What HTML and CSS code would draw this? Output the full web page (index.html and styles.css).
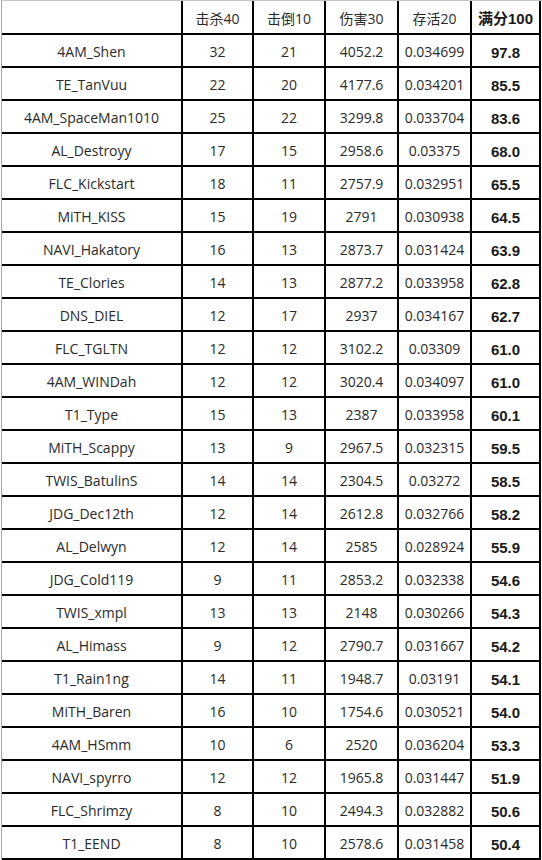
FILE: index.html
```html
<!DOCTYPE html>
<html lang="zh">
<head>
<meta charset="utf-8">
<title>Ranking</title>
<link rel="stylesheet" href="styles.css">
</head>
<body>
<div class="sheet">
  <div class="grid">
    <div class="c hd first"></div>
    <div class="c hd">击杀40</div>
    <div class="c hd">击倒10</div>
    <div class="c hd">伤害30</div>
    <div class="c hd">存活20</div>
    <div class="c hd total">满分100</div>

    <div class="c name">4AM_Shen</div><div class="c">32</div><div class="c">21</div><div class="c">4052.2</div><div class="c">0.034699</div><div class="c total">97.8</div>
    <div class="c name">TE_TanVuu</div><div class="c">22</div><div class="c">20</div><div class="c">4177.6</div><div class="c">0.034201</div><div class="c total">85.5</div>
    <div class="c name">4AM_SpaceMan1010</div><div class="c">25</div><div class="c">22</div><div class="c">3299.8</div><div class="c">0.033704</div><div class="c total">83.6</div>
    <div class="c name">AL_Destroyy</div><div class="c">17</div><div class="c">15</div><div class="c">2958.6</div><div class="c">0.03375</div><div class="c total">68.0</div>
    <div class="c name">FLC_Kickstart</div><div class="c">18</div><div class="c">11</div><div class="c">2757.9</div><div class="c">0.032951</div><div class="c total">65.5</div>
    <div class="c name">MiTH_KISS</div><div class="c">15</div><div class="c">19</div><div class="c">2791</div><div class="c">0.030938</div><div class="c total">64.5</div>
    <div class="c name">NAVI_Hakatory</div><div class="c">16</div><div class="c">13</div><div class="c">2873.7</div><div class="c">0.031424</div><div class="c total">63.9</div>
    <div class="c name">TE_Clories</div><div class="c">14</div><div class="c">13</div><div class="c">2877.2</div><div class="c">0.033958</div><div class="c total">62.8</div>
    <div class="c name">DNS_DIEL</div><div class="c">12</div><div class="c">17</div><div class="c">2937</div><div class="c">0.034167</div><div class="c total">62.7</div>
    <div class="c name">FLC_TGLTN</div><div class="c">12</div><div class="c">12</div><div class="c">3102.2</div><div class="c">0.03309</div><div class="c total">61.0</div>
    <div class="c name">4AM_WINDah</div><div class="c">12</div><div class="c">12</div><div class="c">3020.4</div><div class="c">0.034097</div><div class="c total">61.0</div>
    <div class="c name">T1_Type</div><div class="c">15</div><div class="c">13</div><div class="c">2387</div><div class="c">0.033958</div><div class="c total">60.1</div>
    <div class="c name">MiTH_Scappy</div><div class="c">13</div><div class="c">9</div><div class="c">2967.5</div><div class="c">0.032315</div><div class="c total">59.5</div>
    <div class="c name">TWIS_BatulinS</div><div class="c">14</div><div class="c">14</div><div class="c">2304.5</div><div class="c">0.03272</div><div class="c total">58.5</div>
    <div class="c name">JDG_Dec12th</div><div class="c">12</div><div class="c">14</div><div class="c">2612.8</div><div class="c">0.032766</div><div class="c total">58.2</div>
    <div class="c name">AL_Delwyn</div><div class="c">12</div><div class="c">14</div><div class="c">2585</div><div class="c">0.028924</div><div class="c total">55.9</div>
    <div class="c name">JDG_Cold119</div><div class="c">9</div><div class="c">11</div><div class="c">2853.2</div><div class="c">0.032338</div><div class="c total">54.6</div>
    <div class="c name">TWIS_xmpl</div><div class="c">13</div><div class="c">13</div><div class="c">2148</div><div class="c">0.030266</div><div class="c total">54.3</div>
    <div class="c name">AL_Himass</div><div class="c">9</div><div class="c">12</div><div class="c">2790.7</div><div class="c">0.031667</div><div class="c total">54.2</div>
    <div class="c name">T1_Rain1ng</div><div class="c">14</div><div class="c">11</div><div class="c">1948.7</div><div class="c">0.03191</div><div class="c total">54.1</div>
    <div class="c name">MiTH_Baren</div><div class="c">16</div><div class="c">10</div><div class="c">1754.6</div><div class="c">0.030521</div><div class="c total">54.0</div>
    <div class="c name">4AM_HSmm</div><div class="c">10</div><div class="c">6</div><div class="c">2520</div><div class="c">0.036204</div><div class="c total">53.3</div>
    <div class="c name">NAVI_spyrro</div><div class="c">12</div><div class="c">12</div><div class="c">1965.8</div><div class="c">0.031447</div><div class="c total">51.9</div>
    <div class="c name">FLC_Shrimzy</div><div class="c">8</div><div class="c">10</div><div class="c">2494.3</div><div class="c">0.032882</div><div class="c total">50.6</div>
    <div class="c name">T1_EEND</div><div class="c">8</div><div class="c">10</div><div class="c">2578.6</div><div class="c">0.031458</div><div class="c total">50.4</div>
  </div>
</div>
</body>
</html>
```

FILE: styles.css
```css
html, body {
  margin: 0;
  padding: 0;
  background: #ffffff;
}

.sheet {
  width: 540px;
  margin: 0 0 0 1px;
  border-left: 1px solid #a8a8a8;
  border-top: 1px solid #c4c4c4;
  font-family: "Open Sans", "Noto Sans CJK SC", sans-serif;
  font-size: 14px;
  color: #2a2a2a;
}

.grid {
  display: grid;
  grid-template-columns: 181px 71px 72px 73px 73px 69px;
  grid-template-rows: 34px;
  grid-auto-rows: 33px;
}

.c {
  box-sizing: border-box;
  border-right: 2px solid #000;
  border-bottom: 2px solid #000;
  display: flex;
  align-items: center;
  justify-content: center;
  white-space: nowrap;
  line-height: 1;
  padding-top: 3px;
}

.total {
  font-family: "Liberation Sans", Arial, "Noto Sans CJK SC", sans-serif;
  font-weight: bold;
  font-size: 15px;
  color: #1a1a1a;
}
```
